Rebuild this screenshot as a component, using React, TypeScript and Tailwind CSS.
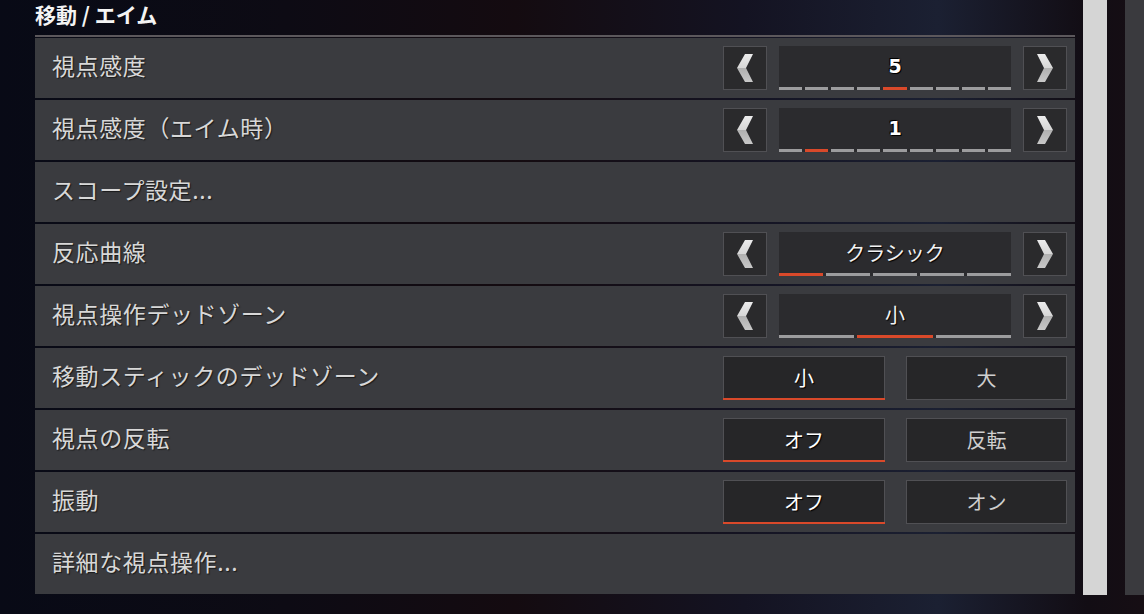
import React from "react";

type Row =
  | { label: string; kind: "link" }
  | { label: string; kind: "slider"; value: string; segs: number; active: number; numeric?: boolean }
  | { label: string; kind: "toggle"; options: [string, string]; active: number };

const rows: Row[] = [
  { label: "視点感度", kind: "slider", value: "5", segs: 9, active: 4, numeric: true },
  { label: "視点感度（エイム時）", kind: "slider", value: "1", segs: 9, active: 1, numeric: true },
  { label: "スコープ設定...", kind: "link" },
  { label: "反応曲線", kind: "slider", value: "クラシック", segs: 5, active: 0 },
  { label: "視点操作デッドゾーン", kind: "slider", value: "小", segs: 3, active: 1 },
  { label: "移動スティックのデッドゾーン", kind: "toggle", options: ["小", "大"], active: 0 },
  { label: "視点の反転", kind: "toggle", options: ["オフ", "反転"], active: 0 },
  { label: "振動", kind: "toggle", options: ["オフ", "オン"], active: 0 },
  { label: "詳細な視点操作...", kind: "link" },
];

const Chevron = ({ dir }: { dir: "left" | "right" }) => (
  <svg width="18" height="30" viewBox="0 0 18 30" className={dir === "right" ? "-scale-x-100" : ""}>
    <defs>
      <linearGradient id={`chev-${dir}`} x1="0" y1="0" x2="0" y2="1">
        <stop offset="0" stopColor="#ececec" />
        <stop offset="0.5" stopColor="#d6d6d6" />
        <stop offset="0.5" stopColor="#b0b0b0" />
        <stop offset="1" stopColor="#c8c8c8" />
      </linearGradient>
    </defs>
    <path d="M9 1 L17 1 L10 15 L17 29 L9 29 L1 15 Z" fill={`url(#chev-${dir})`} />
  </svg>
);

const ArrowBox = ({ dir }: { dir: "left" | "right" }) => (
  <div className="w-[44px] h-[44px] flex items-center justify-center bg-[#2a2a2c] border border-[#505054]">
    <Chevron dir={dir} />
  </div>
);

const Slider = ({ row }: { row: Extract<Row, { kind: "slider" }> }) => (
  <div className="flex items-center gap-3">
    <ArrowBox dir="left" />
    <div className="w-[232px] h-[44px] flex flex-col bg-[#2b2b2e]">
      <div className="flex-1 flex items-center justify-center">
        {row.numeric ? (
          <span className="text-[19px] font-bold text-white [font-family:'DejaVu_Sans',sans-serif] [text-shadow:0_0_2px_#000,1px_1px_0_#000,-1px_-1px_0_#000]">
            {row.value}
          </span>
        ) : (
          <span className="text-[20px] text-[#f2f2f2] [text-shadow:1px_1px_1px_#000]">{row.value}</span>
        )}
      </div>
      <div className="flex gap-[3px] h-[3px]">
        {Array.from({ length: row.segs }).map((_, i) => (
          <div key={i} className={i === row.active ? "flex-1 bg-[#d9492a]" : "flex-1 bg-[#9c9c9e]"} />
        ))}
      </div>
    </div>
    <ArrowBox dir="right" />
  </div>
);

const Toggle = ({ row }: { row: Extract<Row, { kind: "toggle" }> }) => (
  <div className="flex items-center gap-[21px]">
    {row.options.map((opt, i) => (
      <div key={opt} className="relative">
        <div
          className={
            i === row.active
              ? "w-[162px] h-[44px] flex items-center justify-center bg-[#262628] border border-[#505054] text-[20px] text-white [text-shadow:1px_1px_1px_#000]"
              : "w-[161px] h-[44px] flex items-center justify-center bg-[#262628] border border-[#505054] text-[20px] text-[#cfcfcf]"
          }
        >
          {opt}
        </div>
        {i === row.active && <div className="absolute left-0 right-0 bottom-0 h-[2px] bg-[#d9492a]" />}
      </div>
    ))}
  </div>
);

export default function App() {
  return (
    <div className="w-[1144px] h-[614px] overflow-hidden flex bg-[linear-gradient(90deg,#080a16_0%,#0d0b14_25%,#140b10_45%,#141322_65%,#1b2032_82%,#120d14_95%,#160e14_100%)] [font-family:'Noto_Sans_CJK_JP','Noto_Sans',sans-serif]">
      <div className="w-[35px] shrink-0" />
      <div className="w-[1040px] shrink-0 flex flex-col">
        <div className="h-[35px] pt-[1px]">
          <h1 className="text-[21px] font-bold text-[#f4f4f4] leading-[26px]">移動 / エイム</h1>
        </div>
        <div className="h-[2px] bg-[#5c585c]" />
        <div className="h-[1px]" />
        <div className="flex flex-col gap-[2px]">
          {rows.map((row) => (
            <div key={row.label} className="h-[60px] flex items-center justify-between pl-[17px] pr-[8px] bg-[#3a3b3f]">
              <span className="text-[23px] leading-none -mt-[5px] text-[#d8d8d8] tracking-[0.6px] [text-shadow:1px_1px_1px_#1a1a1a]">
                {row.label}
              </span>
              {row.kind === "slider" && <Slider row={row} />}
              {row.kind === "toggle" && <Toggle row={row} />}
            </div>
          ))}
        </div>
      </div>
      <div className="w-[8px] shrink-0" />
      <div className="w-[24px] h-[595px] shrink-0 bg-[#d5d5d5]" />
      <div className="w-[18px] shrink-0" />
      <div className="w-[19px] h-[595px] shrink-0 bg-[#3a3a3e]" />
    </div>
  );
}
